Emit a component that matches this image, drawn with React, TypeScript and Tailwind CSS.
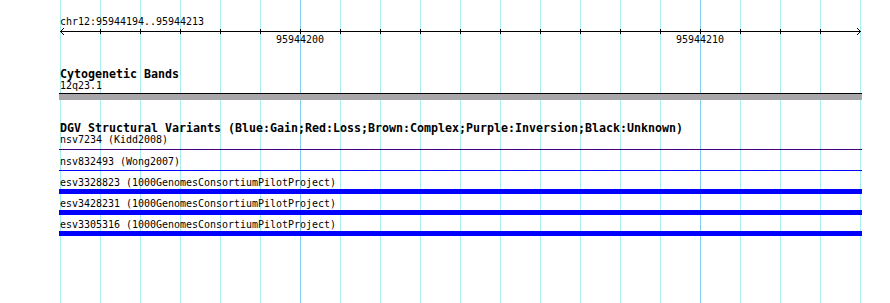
import React from "react";

const mono = { fontFamily: '"DejaVu Sans Mono", "Liberation Mono", monospace' };

function GridLines() {
  const lines = Array.from({ length: 21 }, (_, i) => i);
  return (
    <div className="absolute inset-0 flex gap-[39px] pl-[60px]">
      {lines.map((i) =>
        i === 6 || i === 16 ? (
          <div key={i} className="w-px h-full bg-[#84ccf0]" />
        ) : (
          <div key={i} className="w-px h-full bg-[#a8eef0]" />
        )
      )}
    </div>
  );
}

function Ruler() {
  const ticks = Array.from({ length: 19 }, (_, k) => 41 + 40 * k + 0.5);
  return (
    <svg width="803" height="7" className="block">
      <line x1="1" y1="3.5" x2="802" y2="3.5" stroke="#000" strokeWidth="1" shapeRendering="crispEdges" />
      {ticks.map((x) => (
        <line key={x} x1={x} y1="1" x2={x} y2="6" stroke="#000" strokeWidth="1" shapeRendering="crispEdges" />
      ))}
      <polyline points="5,0 1.5,3.5 5,7" fill="none" stroke="#000" strokeWidth="1" />
      <polyline points="798,0 801.5,3.5 798,7" fill="none" stroke="#000" strokeWidth="1" />
    </svg>
  );
}

function Row({ label, kind }: { label: string; kind: "purple" | "blue" | "bar"; }) {
  return (
    <div>
      <div className="h-[12px] leading-[12px] text-[9.97px] pl-px whitespace-nowrap">{label}</div>
      {kind === "purple" && <div className="mt-[3px] h-px bg-[#400080] mb-[6px]" />}
      {kind === "blue" && <div className="mt-[2px] h-px bg-[#0000ff] mb-[6px]" />}
      {kind === "bar" && <div className="h-[5px] bg-[#0000ff] mb-[4px]" />}
    </div>
  );
}

export default function App() {
  return (
    <div className="relative w-[890px] h-[303px] bg-white overflow-hidden text-black" style={mono}>
      <GridLines />
      <div className="relative pl-[59px] w-[862px]">
        <div className="mt-[16px] h-[12px] leading-[12px] text-[9.97px] pl-px whitespace-nowrap">
          chr12:95944194..95944213
        </div>
        <Ruler />
        <div className="-mt-px flex h-[12px] leading-[12px] text-[9.97px]">
          <div className="w-[201px]" />
          <div className="w-[80px] text-center">95944200</div>
          <div className="w-[320px]" />
          <div className="w-[80px] text-center">95944210</div>
        </div>

        <div className="mt-[22px] h-[12px] leading-[12px] text-[11.63px] font-bold pl-px whitespace-nowrap">
          Cytogenetic Bands
        </div>
        <div className="h-[12px] leading-[12px] text-[9.97px] pl-px whitespace-nowrap">12q23.1</div>
        <div className="mt-px border-t border-black h-[7px] bg-[#a9a6a9]" />

        <div className="mt-[22px] h-[12px] leading-[12px] text-[11.63px] font-bold pl-px whitespace-nowrap">
          DGV Structural Variants (Blue:Gain;Red:Loss;Brown:Complex;Purple:Inversion;Black:Unknown)
        </div>
        <Row label="nsv7234 (Kidd2008)" kind="purple" />
        <Row label="nsv832493 (Wong2007)" kind="blue" />
        <Row label="esv3328823 (1000GenomesConsortiumPilotProject)" kind="bar" />
        <Row label="esv3428231 (1000GenomesConsortiumPilotProject)" kind="bar" />
        <Row label="esv3305316 (1000GenomesConsortiumPilotProject)" kind="bar" />
      </div>
    </div>
  );
}
